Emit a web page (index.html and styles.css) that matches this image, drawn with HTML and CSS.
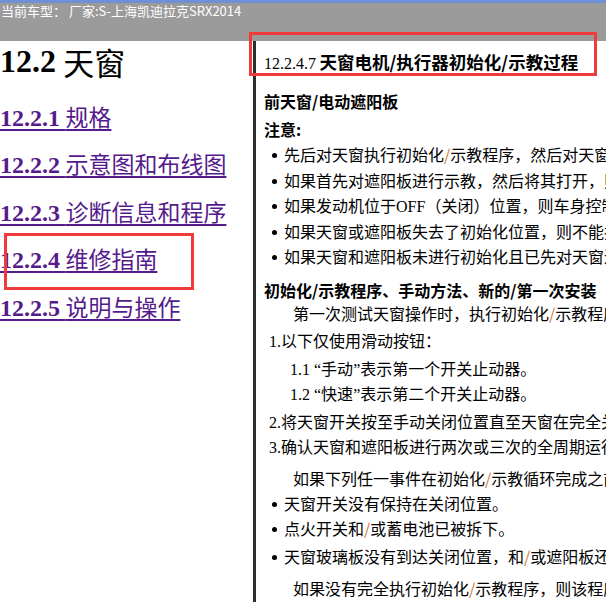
FILE: index.html
```html
<!DOCTYPE html>
<html lang="zh-CN">
<head>
<meta charset="utf-8">
<title>12.2 天窗</title>
<link rel="stylesheet" href="styles.css">
</head>
<body>
<header class="hdr">当前车型： 厂家:S-上海凯迪拉克SRX2014</header>
<div class="main">
  <nav class="left">
    <h1 class="toc-title"><span class="num">12.2</span> <span class="cjk">天窗</span></h1>
    <a class="toc-link" href="#"><span class="num">12.2.1</span> <span class="cjk">规格</span></a>
    <a class="toc-link" href="#"><span class="num">12.2.2</span> <span class="cjk">示意图和布线图</span></a>
    <a class="toc-link" href="#"><span class="num">12.2.3</span> <span class="cjk">诊断信息和程序</span></a>
    <a class="toc-link" href="#"><span class="num">12.2.4</span> <span class="cjk">维修指南</span></a>
    <a class="toc-link" href="#"><span class="num">12.2.5</span> <span class="cjk">说明与操作</span></a>
  </nav>
  <section class="right">
    <div class="ln title"><span class="tnum">12.2.4.7</span> <b>天窗电机/执行器初始化/示教过程</b></div>
    <div class="ln bold mt15">前天窗/电动遮阳板</div>
    <div class="ln bold mt3">注意:</div>
    <ul class="bul">
      <li>先后对天窗执行初始化<span class="sl">/</span>示教程序，然后对天窗遮阳板执行初始化<span class="sl">/</span>示教程序。</li>
      <li>如果首先对遮阳板进行示教，然后将其打开，则天窗将无法进行示教。</li>
      <li>如果发动机位于<span class="lat">OFF</span>（关闭）位置，则车身控制模块将不能执行示教。</li>
      <li>如果天窗或遮阳板失去了初始化位置，则不能执行一键打开功能。</li>
      <li>如果天窗和遮阳板未进行初始化且已先对天窗进行示教，则须重新示教。</li>
    </ul>
    <div class="ln bold mt8">初始化/示教程序、手动方法、新的/第一次安装</div>
    <div class="ln ind mt-2">第一次测试天窗操作时，执行初始化<span class="sl">/</span>示教程序。</div>
    <div class="ln step mt2"><span class="lat">1.</span>以下仅使用滑动按钮：</div>
    <div class="ln sub mt3"><span class="lat">1.1 “</span>手动<span class="lat">”</span>表示第一个开关止动器。</div>
    <div class="ln sub"><span class="lat">1.2 “</span>快速<span class="lat">”</span>表示第二个开关止动器。</div>
    <div class="ln step mt3"><span class="lat">2.</span>将天窗开关按至手动关闭位置直至天窗在完全关闭位置停止运动。</div>
    <div class="ln step"><span class="lat">3.</span>确认天窗和遮阳板进行两次或三次的全周期运行。</div>
    <div class="ln ind mt7">如果下列任一事件在初始化<span class="sl">/</span>示教循环完成之前发生，则须重新执行。</div>
    <ul class="bul">
      <li>天窗开关没有保持在关闭位置。</li>
      <li>点火开关和<span class="sl">/</span>或蓄电池已被拆下。</li>
      <li class="mt2">天窗玻璃板没有到达关闭位置，和<span class="sl">/</span>或遮阳板还没有到达打开位置。</li>
    </ul>
    <div class="ln ind mt7">如果没有完全执行初始化<span class="sl">/</span>示教程序，则该程序将被取消。</div>
  </section>
</div>
<div class="mark mark-title"></div>
<div class="mark mark-nav"></div>
</body>
</html>
```

FILE: styles.css
```css
html, body {
  margin: 0;
  padding: 0;
  width: 606px;
  height: 602px;
  overflow: hidden;
  background: #ffffff;
}

body {
  position: relative;
  font-family: "Noto Sans CJK SC", "Liberation Sans", sans-serif;
  color: #000;
}

.hdr {
  height: 38px;
  border-top: 3px solid #6f8fd6;
  background: #9b9b9b;
  color: #ffffff;
  font-size: 13px;
  line-height: 16px;
  padding-left: 1px;
  white-space: nowrap;
  box-sizing: content-box;
}

.main {
  display: flex;
  height: 561px;
}

.left {
  width: 253px;
  flex: none;
  display: flex;
  flex-direction: column;
  align-items: flex-start;
  padding-top: 2px;
  gap: 19.5px;
  box-sizing: border-box;
}

.num {
  font-family: "Liberation Serif", serif;
  font-weight: 700;
}

.cjk {
  font-family: "Noto Sans CJK SC", sans-serif;
  font-weight: 400;
}

.toc-title {
  display: block;
  margin: 0 0 2px 0;
  height: 37px;
  font-size: 32px;
  line-height: 37px;
  font-weight: 700;
  white-space: nowrap;
}

.toc-title span {
  line-height: 37px;
  vertical-align: top;
}

.toc-title .cjk {
  font-size: 31px;
}

.toc-link {
  display: block;
  height: 28px;
  font-size: 24px;
  line-height: 28px;
  color: #551a8b;
  text-decoration: underline;
  text-decoration-thickness: 2px;
  text-underline-offset: 3px;
  white-space: nowrap;
}

.toc-link span {
  line-height: 28px;
}

.toc-link .cjk {
  font-size: 23px;
}

.right {
  flex: 1;
  min-width: 0;
  border-left: 3px solid #2e2e2e;
  padding: 8px 0 0 8px;
  overflow: hidden;
  white-space: nowrap;
  font-size: 16px;
  box-sizing: border-box;
}

.ln {
  height: 25px;
  line-height: 25px;
}

.title b {
  font-weight: 700;
  font-size: 17.5px;
}

.tnum {
  font-family: "Liberation Serif", serif;
  font-weight: 400;
}

.bold {
  font-weight: 700;
}

.ind {
  padding-left: 29px;
}

.step {
  padding-left: 5px;
}

.sub {
  padding-left: 26px;
}

.lat {
  font-family: "Liberation Serif", serif;
}

.sl {
  color: #d4783a;
}

.bul {
  list-style: none;
  margin: 0;
  padding: 0;
}

.bul li {
  height: 25.5px;
  line-height: 25.5px;
  padding-left: 20px;
  position: relative;
}

.bul li::before {
  content: "";
  position: absolute;
  left: 8px;
  top: 11px;
  width: 5px;
  height: 5px;
  border-radius: 50%;
  background: #000;
}

.mt-2 { margin-top: -2px; }
.mt2 { margin-top: 2px; }
.mt3 { margin-top: 3px; }
.mt7 { margin-top: 7px; }
.mt8 { margin-top: 8px; }
.mt15 { margin-top: 15px; }

.mark {
  position: absolute;
  border: 3px solid #ef3b3b;
  box-sizing: border-box;
  pointer-events: none;
}

.mark-title {
  left: 249px;
  top: 32px;
  width: 348px;
  height: 44px;
}

.mark-nav {
  left: 4px;
  top: 233px;
  width: 190px;
  height: 57px;
}
```
